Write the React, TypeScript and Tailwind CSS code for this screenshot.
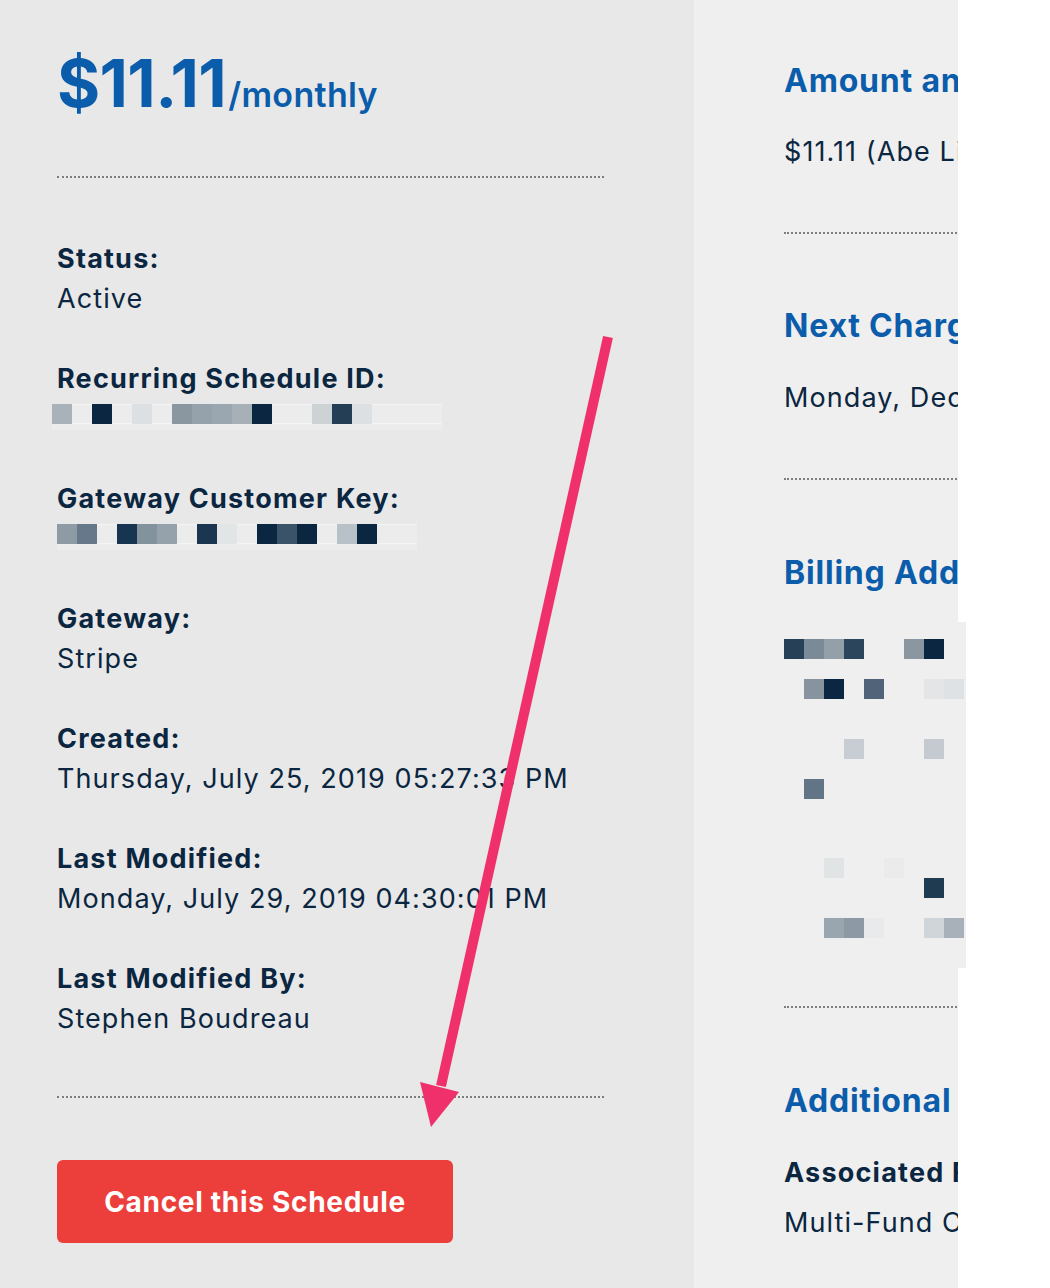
import React from 'react'

// Recurring schedule detail — left summary column + clipped right details column.

type Block = [number, number, string] // col, row offset, colour

const ID_BLOCKS: Block[] = [
  [0, 0, '#a9b1b9'], [2, 0, '#0b2640'], [4, 0, '#dde0e2'], [6, 0, '#8a97a1'], [7, 0, '#95a1ab'],
  [8, 0, '#9ba7b0'], [9, 0, '#a7b0b7'], [10, 0, '#0b2640'], [13, 0, '#cdd2d5'], [14, 0, '#243e55'],
  [15, 0, '#dde0e2'],
]

const KEY_BLOCKS: Block[] = [
  [0, 0, '#8f9ba4'], [1, 0, '#66788a'], [3, 0, '#173550'], [4, 0, '#83939e'], [5, 0, '#95a2ac'],
  [7, 0, '#1a3650'], [8, 0, '#e2e5e6'], [10, 0, '#0b2640'], [11, 0, '#3a5368'], [12, 0, '#0b2640'],
  [14, 0, '#b9c1c8'], [15, 0, '#0b2640'],
]

// billing address redaction, 20px cells
const ADDRESS_BLOCKS: Block[] = [
  [0, 0, '#264157'], [1, 0, '#7b8a97'], [2, 0, '#93a0aa'], [3, 0, '#2b455c'], [6, 0, '#8a97a1'], [7, 0, '#0b2640'],
  [1, 40, '#8794a0'], [2, 40, '#0b2640'], [4, 40, '#506379'], [7, 40, '#e3e5e7'], [8, 40, '#dfe2e5'],
  [3, 100, '#c8cdd3'], [7, 100, '#c4cad0'],
  [1, 140, '#617586'],
  [2, 219, '#e1e4e5'], [5, 219, '#ebebeb'],
  [7, 239, '#1f3b52'],
  [2, 279, '#9aa6af'], [3, 279, '#8d9aa5'], [4, 279, '#e9eaeb'], [7, 279, '#d0d5d9'], [8, 279, '#a8b1b9'],
]

function Redacted({ blocks, width }: { blocks: Block[]; width: number }) {
  return (
    <svg width={width} height={30} className="block">
      <rect x={0} y={2} width={width} height={26} fill="#ececec" />
      <rect x={0} y={2} width={width} height={1} fill="#f4f4f4" />
      <rect x={0} y={21} width={width} height={1} fill="#f4f4f4" />
      {blocks.map(([c, r, fill], i) => (
        <rect key={i} x={c * 20} y={r + 2} width={20} height={20} fill={fill} />
      ))}
    </svg>
  )
}

const LABEL = 'text-[27px] font-bold leading-10 tracking-[0.045em] text-[#0b2640]'
const VALUE = 'text-[27px] leading-10 tracking-[0.04em] text-[#0b2640]'
const HEADING = 'text-[32px] font-bold leading-[44px] tracking-[0.025em] text-[#0b5dab]'

function Field({ label, children }: { label: string; children: React.ReactNode }) {
  return (
    <div className="mb-10">
      <div className={LABEL}>{label}</div>
      <div className={VALUE}>{children}</div>
    </div>
  )
}

function Dotted({ className = '' }: { className?: string }) {
  return <div className={`border-t-2 border-dotted border-[#7d7d7d] ${className}`} />
}

export default function App() {
  return (
    <div
      className="relative flex h-[1288px] w-[1050px] overflow-hidden bg-white"
      style={{ fontFamily: 'Inter, "Open Sans", "Liberation Sans", sans-serif' }}
    >
      {/* left column */}
      <div className="w-[694px] shrink-0 bg-[#e8e8e8] pl-[57px] pr-[90px]">
        <div className="mt-[43px] flex items-baseline text-[#0b5dab]">
          <span className="text-[66px] font-bold leading-[80px] tracking-[-0.01em]">$11.11</span>
          <span className="ml-[2px] text-[34px] font-semibold tracking-[0.01em]">/monthly</span>
        </div>
        <Dotted className="mt-[53px]" />

        <div className="mt-[61px]">
          <Field label="Status:">Active</Field>
          <div className="mb-10">
            <div className={LABEL}>Recurring Schedule ID:</div>
            <div className="-ml-[5px] h-10 pt-[3px]">
              <Redacted blocks={ID_BLOCKS} width={390} />
            </div>
          </div>
          <div className="mb-10">
            <div className={LABEL}>Gateway Customer Key:</div>
            <div className="h-10 pt-[3px]">
              <Redacted blocks={KEY_BLOCKS} width={360} />
            </div>
          </div>
          <Field label="Gateway:">Stripe</Field>
          <Field label="Created:">Thursday, July 25, 2019 05:27:33 PM</Field>
          <Field label="Last Modified:">Monday, July 29, 2019 04:30:01 PM</Field>
          <Field label="Last Modified By:">Stephen Boudreau</Field>
        </div>

        <Dotted className="mt-[57px]" />

        <button className="mt-[62px] flex h-[83px] w-[396px] items-center justify-center rounded-[6px] bg-[#ec3f3b] text-[28px] font-bold tracking-[0.025em] text-white">
          Cancel this Schedule
        </button>
      </div>

      {/* right column, clipped at the edge of the screenshot */}
      <div className="w-[264px] shrink-0 overflow-hidden bg-[#efefef] pl-[90px]">
        <div className="w-[600px] whitespace-nowrap">
          <h2 className={`mt-[59px] ${HEADING}`}>Amount and Fund</h2>
          <p className={`mt-[29px] ${VALUE}`}>$11.11 (Abe Lincoln Fund)</p>
          <Dotted className="mt-[60px] w-[200px]" />

          <h2 className={`mt-[70px] ${HEADING}`}>Next Charge Date</h2>
          <p className={`mt-[30px] ${VALUE}`}>Monday, December 2, 2019</p>
          <Dotted className="mt-[60px] w-[200px]" />

          <h2 className={`mt-[71px] ${HEADING}`}>Billing Address</h2>
          <div className="mt-[28px] h-[346px]" />
          <Dotted className="mt-[37px] w-[200px]" />

          <h2 className={`mt-[71px] ${HEADING}`}>Additional Info</h2>
          <div className={`mt-[30px] ${LABEL}`}>Associated Fund:</div>
          <div className={`mt-[10px] ${VALUE}`}>Multi-Fund Campaign</div>
        </div>
      </div>

      {/* billing address redaction overlay */}
      <svg className="pointer-events-none absolute left-[774px] top-[622px]" width={192} height={346}>
        <rect x={0} y={0} width={192} height={346} fill="#efefef" />
        {ADDRESS_BLOCKS.map(([c, y, fill], i) => (
          <rect key={i} x={10 + c * 20} y={17 + y} width={20} height={20} fill={fill} />
        ))}
      </svg>

      {/* annotation arrow */}
      <svg className="pointer-events-none absolute left-0 top-0" width={1050} height={1288}>
        <line x1={608} y1={337} x2={441} y2={1086} stroke="#f0306b" strokeWidth={10} />
        <polygon points="420,1082 459,1092 431,1127" fill="#f0306b" />
      </svg>
    </div>
  )
}
